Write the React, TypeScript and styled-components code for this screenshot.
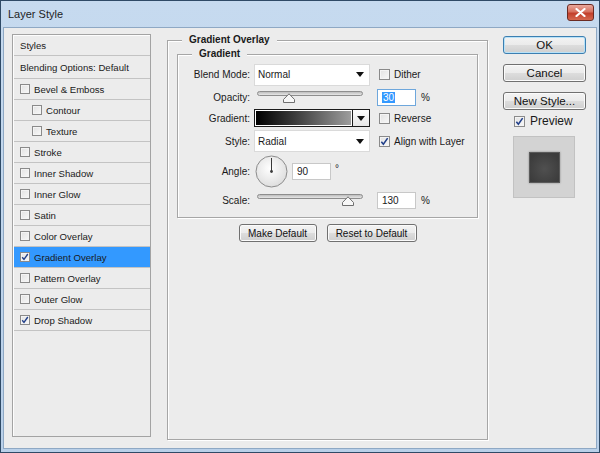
import React from 'react';
import styled, { createGlobalStyle } from 'styled-components';

const GlobalStyle = createGlobalStyle`
  html, body { margin: 0; padding: 0; background: #ececec; }
  body { font-family: "Liberation Sans", Arial, sans-serif; color: #1a1a1a; }
  * { box-sizing: border-box; }
`;

const Window = styled.div`
  width: 600px;
  height: 453px;
  display: flex;
  flex-direction: column;
  border: 1px solid #2f4a66;
  background: linear-gradient(#c6daef, #b9d0e9);
  padding: 0 2px 3px;
`;

const TitleBar = styled.div`
  height: 26px;
  display: flex;
  align-items: flex-start;
  justify-content: space-between;
`;

const Title = styled.span`
  font-size: 11px;
  line-height: 26px;
  padding-left: 5px;
  color: #1e1e1e;
`;

const CloseButton = styled.div`
  width: 27px;
  height: 17px;
  margin: 3px 3px 0 0;
  border: 1px solid #6b2a22;
  border-radius: 3px;
  background: linear-gradient(#eaa89c 0%, #d6715f 45%, #c23f2b 55%, #d4684f 100%);
  display: flex;
  align-items: center;
  justify-content: center;
`;

const Body = styled.div`
  flex: 1;
  display: flex;
  align-items: flex-start;
  background: #ececec;
  border: 1px solid #8ea8c4;
  padding: 6px 0 0 8px;
`;

/* ---------- left styles list ---------- */

const Sidebar = styled.div`
  width: 139px;
  height: 403px;
  border: 1px solid #a3a3a3;
  box-shadow: inset 1px 1px 0 #fdfdfd;
  padding: 0 0 0 1px;
  display: flex;
  flex-direction: column;
`;

const ListRow = styled.div<{ $h: number; $indent: number; $active?: boolean }>`
  height: ${p => p.$h}px;
  flex-shrink: 0;
  display: flex;
  align-items: center;
  gap: 4px;
  padding-left: ${p => p.$indent}px;
  border-bottom: 1px solid #c3c3c3;
  background: ${p => (p.$active ? '#3399ff' : 'transparent')};
  font-size: 9.6px;
  color: #1a1a1a;
  white-space: nowrap;
`;

/* ---------- checkbox ---------- */

const Box = styled.span<{ $size: number }>`
  width: ${p => p.$size}px;
  height: ${p => p.$size}px;
  flex-shrink: 0;
  border: 1px solid #8a8a8a;
  background: linear-gradient(135deg, #e2e2e2, #f8f8f8);
  box-shadow: inset 0 0 0 1px #f4f4f4;
  display: flex;
  align-items: center;
  justify-content: center;
`;

const Check = ({ checked, size = 10 }: { checked?: boolean; size?: number }) => (
  <Box $size={size}>
    {checked && (
      <svg width={size - 2} height={size - 2} viewBox="0 0 8 8">
        <path d="M1.2 4.2 L3 6.4 L6.8 1" fill="none" stroke="#22408a" strokeWidth="1.4" />
      </svg>
    )}
  </Box>
);

/* ---------- group boxes ---------- */

const GroupBox = styled.div<{ $w: number; $h?: number; $top: number; $pad: number }>`
  width: ${p => p.$w}px;
  ${p => (p.$h ? `height: ${p.$h}px;` : '')}
  margin-top: ${p => p.$top}px;
  border: 1px solid #a6a6a6;
  box-shadow: inset 1px 1px 0 #fff, 1px 1px 0 #fff;
  padding: 0 ${p => p.$pad}px;
  display: flex;
  flex-direction: column;
`;

const Legend = styled.span<{ $left: number }>`
  align-self: flex-start;
  margin: -7px 0 0 ${p => p.$left}px;
  padding: 0 7px;
  background: #ececec;
  font-size: 10px;
  font-weight: bold;
  line-height: 12px;
  color: #1a1a1a;
`;

const Rows = styled.div`
  display: flex;
  flex-direction: column;
  padding: 3px 0 5px;
`;

const FormRow = styled.div<{ $h: number }>`
  height: ${p => p.$h}px;
  display: flex;
  align-items: center;
  font-size: 10px;
`;

const Label = styled.span`
  width: 72px;
  margin-right: 4px;
  text-align: right;
  font-size: 10px;
  color: #1a1a1a;
`;

const Select = styled.div`
  width: 116px;
  height: 22px;
  background: #fff;
  border: 1px solid #dadada;
  display: flex;
  align-items: center;
  justify-content: space-between;
  padding: 0 5px 0 3px;
  font-size: 10px;
`;

const Arrow = () => (
  <svg width="8" height="5" viewBox="0 0 8 5">
    <polygon points="0,0 8,0 4,5" fill="#111" />
  </svg>
);

const Option = styled.label`
  display: flex;
  align-items: center;
  gap: 4px;
  margin-left: 9px;
  font-size: 10px;
`;

const GradientPicker = styled.div`
  width: 116px;
  height: 18px;
  border: 1px solid #1a1a1a;
  display: flex;
  background: #fff;
`;

const GradientFill = styled.div`
  flex: 1;
  margin: 1px;
  background: linear-gradient(90deg, #000 0%, #3a3a3a 40%, #9d9d9d 100%);
`;

const GradientArrow = styled.div`
  width: 17px;
  border-left: 1px solid #1a1a1a;
  display: flex;
  align-items: center;
  justify-content: center;
  background: linear-gradient(#fdfdfd, #e6e6e6);
`;

const SliderWrap = styled.div`
  width: 116px;
  padding: 0 7px 0 3px;
  height: 14px;
  display: flex;
  align-items: flex-start;
`;

const Track = styled.div`
  position: relative;
  width: 100%;
  height: 5px;
  margin-top: 1px;
  border: 1px solid #8d8d8d;
  border-radius: 3px;
  background: linear-gradient(#bdbdbd, #e6e6e6);
`;

const Thumb = styled.svg`
  position: absolute;
  top: 1px;
  margin-left: -6px;
`;

const Slider = ({ value, max }: { value: number; max: number }) => (
  <SliderWrap>
    <Track>
      <Thumb width="12" height="10" viewBox="0 0 12 10" style={{ left: `${(value / max) * 100}%` }}>
        <path d="M0.5 9.5 L0.5 6.5 L6 0.8 L11.5 6.5 L11.5 9.5 Z" fill="#f7f7f7" stroke="#6f6f6f" />
      </Thumb>
    </Track>
  </SliderWrap>
);

const Input = styled.div<{ $focus?: boolean; $gap: number }>`
  width: 39px;
  height: 17px;
  margin-left: ${p => p.$gap}px;
  background: #fff;
  border: 1px solid ${p => (p.$focus ? '#6ea7dc' : '#c8c8c8')};
  display: flex;
  align-items: center;
  padding-left: 4px;
  font-size: 10px;
`;

const Selected = styled.span`
  background: #3399ff;
  color: #fff;
  padding: 0 1px;
`;

const Unit = styled.span<{ $up?: boolean }>`
  margin-left: 5px;
  font-size: 10px;
  ${p => (p.$up ? 'align-self: flex-start; margin-top: 9px; margin-left: 4px;' : '')}
`;

const Dial = styled.svg`
  margin-left: 1px;
  flex-shrink: 0;
`;

const ButtonRow = styled.div`
  display: flex;
  justify-content: center;
  gap: 10px;
  margin-top: 6px;
`;

const Button = styled.div<{ $w?: number; $h: number; $fs: number; $default?: boolean }>`
  width: ${p => (p.$w ? `${p.$w}px` : '100%')};
  height: ${p => p.$h}px;
  border: 1px solid ${p => (p.$default ? '#3c7fb1' : '#707070')};
  border-radius: 3px;
  background: linear-gradient(#f3f3f3 0%, #ebebeb 50%, #dddddd 51%, #cfcfcf 100%);
  box-shadow: inset 0 0 0 1px ${p => (p.$default ? '#b8e2f8' : '#fbfbfb')};
  display: flex;
  align-items: center;
  justify-content: center;
  font-size: ${p => p.$fs}px;
  color: #111;
`;

/* ---------- right column ---------- */

const MainColumn = styled.div`
  margin-left: 16px;
  display: flex;
  flex-direction: column;
`;

const RightColumn = styled.div`
  width: 83px;
  margin-left: 15px;
  margin-top: 2px;
  display: flex;
  flex-direction: column;
  gap: 10px;
`;

const PreviewToggle = styled.label`
  display: flex;
  align-items: center;
  gap: 5px;
  margin: -6px 0 0 11px;
  font-size: 12px;
`;

const PreviewBox = styled.div`
  width: 62px;
  height: 62px;
  margin: -2px 0 0 10px;
  background: #d3d3d3;
  border: 1px solid #c2c2c2;
  display: flex;
  align-items: center;
  justify-content: center;
`;

const PreviewSwatch = styled.div`
  width: 31px;
  height: 31px;
  border: 1px solid #5a5a5a;
  background: radial-gradient(circle at 50% 55%, #505050, #3c3c3c 80%);
  box-shadow: 0 0 2px rgba(0, 0, 0, 0.35);
`;

const styles: { name: string; checked?: boolean; indent?: boolean; active?: boolean }[] = [
  { name: 'Bevel & Emboss' },
  { name: 'Contour', indent: true },
  { name: 'Texture', indent: true },
  { name: 'Stroke' },
  { name: 'Inner Shadow' },
  { name: 'Inner Glow' },
  { name: 'Satin' },
  { name: 'Color Overlay' },
  { name: 'Gradient Overlay', checked: true, active: true },
  { name: 'Pattern Overlay' },
  { name: 'Outer Glow' },
  { name: 'Drop Shadow', checked: true },
];

export default function App() {
  return (
    <>
      <GlobalStyle />
      <Window>
        <TitleBar>
          <Title>Layer Style</Title>
          <CloseButton>
            <svg width="11" height="9" viewBox="0 0 11 9">
              <path d="M1.5 1 L9.5 8 M9.5 1 L1.5 8" stroke="#fff" strokeWidth="2.2" strokeLinecap="round" />
            </svg>
          </CloseButton>
        </TitleBar>
        <Body>
          <Sidebar>
            <ListRow $h={21} $indent={6}>Styles</ListRow>
            <ListRow $h={23} $indent={6}>Blending Options: Default</ListRow>
            {styles.map(s => (
              <ListRow key={s.name} $h={21} $indent={s.indent ? 18 : 6} $active={s.active}>
                <Check checked={s.checked} />
                {s.name}
              </ListRow>
            ))}
          </Sidebar>

          <MainColumn>
            <GroupBox $w={321} $h={400} $top={6} $pad={9}>
              <Legend $left={5}>Gradient Overlay</Legend>
              <GroupBox $w={301} $top={8} $pad={0}>
                <Legend $left={14}>Gradient</Legend>
                <Rows>
                  <FormRow $h={23}>
                    <Label>Blend Mode:</Label>
                    <Select>
                      Normal
                      <Arrow />
                    </Select>
                    <Option>
                      <Check size={11} />
                      Dither
                    </Option>
                  </FormRow>
                  <FormRow $h={22}>
                    <Label>Opacity:</Label>
                    <Slider value={30} max={100} />
                    <Input $focus $gap={7}>
                      <Selected>30</Selected>
                    </Input>
                    <Unit>%</Unit>
                  </FormRow>
                  <FormRow $h={20}>
                    <Label>Gradient:</Label>
                    <GradientPicker>
                      <GradientFill />
                      <GradientArrow>
                        <Arrow />
                      </GradientArrow>
                    </GradientPicker>
                    <Option>
                      <Check size={11} />
                      Reverse
                    </Option>
                  </FormRow>
                  <FormRow $h={26}>
                    <Label>Style:</Label>
                    <Select>
                      Radial
                      <Arrow />
                    </Select>
                    <Option>
                      <Check size={11} checked />
                      Align with Layer
                    </Option>
                  </FormRow>
                  <FormRow $h={34}>
                    <Label>Angle:</Label>
                    <Dial width="33" height="33" viewBox="0 0 33 33">
                      <defs>
                        <radialGradient id="dialFill" cx="45%" cy="40%" r="60%">
                          <stop offset="0%" stopColor="#ffffff" />
                          <stop offset="100%" stopColor="#dedede" />
                        </radialGradient>
                      </defs>
                      <circle cx="16.5" cy="16.5" r="15.5" fill="url(#dialFill)" stroke="#8c8c8c" />
                      <line x1="16.5" y1="16.5" x2="16.5" y2="3" stroke="#3a3a3a" strokeWidth="1" />
                      <circle cx="16.5" cy="16.5" r="1.4" fill="#3a3a3a" />
                    </Dial>
                    <Input $gap={4}>90</Input>
                    <Unit $up>°</Unit>
                  </FormRow>
                  <FormRow $h={24}>
                    <Label>Scale:</Label>
                    <Slider value={130} max={150} />
                    <Input $gap={7}>130</Input>
                    <Unit>%</Unit>
                  </FormRow>
                </Rows>
              </GroupBox>
              <ButtonRow>
                <Button $w={78} $h={18} $fs={10}>Make Default</Button>
                <Button $w={90} $h={18} $fs={10}>Reset to Default</Button>
              </ButtonRow>
            </GroupBox>
          </MainColumn>

          <RightColumn>
            <Button $h={18} $fs={11.5} $default>OK</Button>
            <Button $h={18} $fs={11.5}>Cancel</Button>
            <Button $h={18} $fs={11.5}>New Style...</Button>
            <PreviewToggle>
              <Check size={11} checked />
              Preview
            </PreviewToggle>
            <PreviewBox>
              <PreviewSwatch />
            </PreviewBox>
          </RightColumn>
        </Body>
      </Window>
    </>
  );
}
